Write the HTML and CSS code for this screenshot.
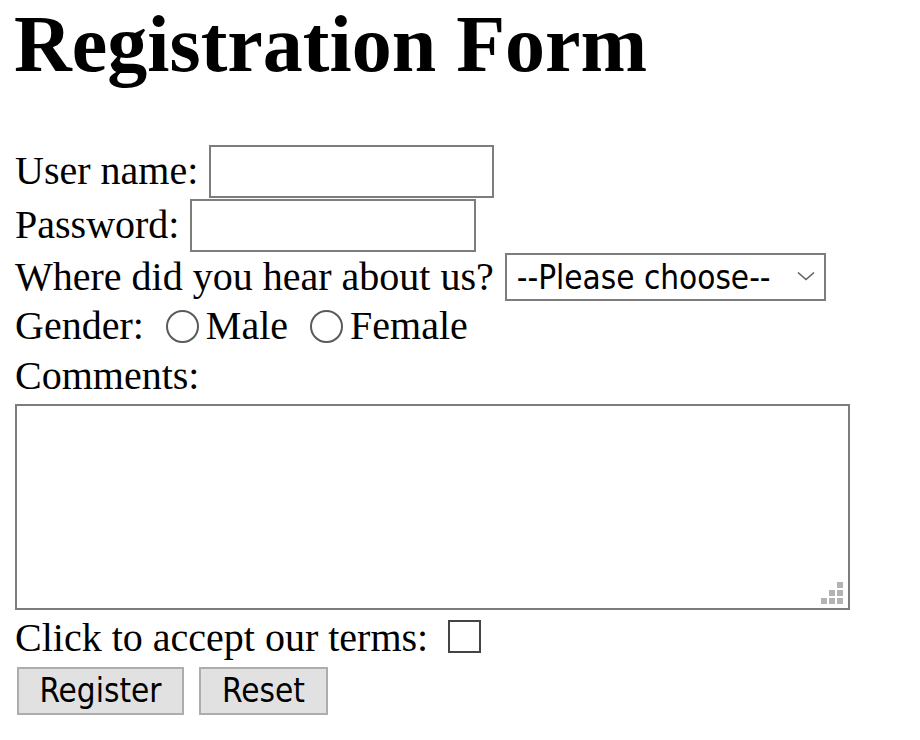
FILE: index.html
```html
<!DOCTYPE html>
<html lang="en">
<head>
<meta charset="utf-8">
<title>Registration Form</title>
<link rel="stylesheet" href="styles.css">
</head>
<body>
<div class="page">
  <h1 class="title">Registration Form</h1>
  <form class="form">
    <div class="row row-user">
      <label class="label" for="user">User name:</label>
      <input class="field field-user" id="user" type="text">
    </div>
    <div class="row row-pass">
      <label class="label" for="pass">Password:</label>
      <input class="field field-pass" id="pass" type="password">
    </div>
    <div class="row row-where">
      <label class="label" for="where">Where did you hear about us?</label>
      <span class="select-wrap">
        <select class="select" id="where">
          <option>--Please choose--</option>
          <option>Friend</option>
          <option>Search engine</option>
          <option>Advertisement</option>
        </select>
        <svg class="chevron" viewBox="0 0 18 10" aria-hidden="true"><path d="M1 1.5 L9 8.5 L17 1.5" fill="none" stroke="#5f5f5f" stroke-width="1.6"/></svg>
      </span>
    </div>
    <div class="row row-gender">
      <span class="label label-gender">Gender:</span>
      <input class="radio" type="radio" name="gender" id="male"><label class="label label-gender" for="male">Male</label>
      <input class="radio" type="radio" name="gender" id="female"><label class="label label-gender" for="female">Female</label>
    </div>
    <div class="row row-comments">
      <label class="label label-comments" for="comments">Comments:</label>
    </div>
    <div class="textarea-wrap">
      <textarea class="comments" id="comments"></textarea>
      <span class="grip" aria-hidden="true">
        <i class="dot d1"></i><i class="dot d2"></i><i class="dot d3"></i>
        <i class="dot d4"></i><i class="dot d5"></i><i class="dot d6"></i>
      </span>
    </div>
    <div class="row row-terms">
      <label class="label label-terms" for="terms">Click to accept our terms:</label>
      <input class="check" type="checkbox" id="terms">
    </div>
    <div class="row row-buttons">
      <button class="btn btn-register" type="submit">Register</button>
      <button class="btn btn-reset" type="reset">Reset</button>
    </div>
  </form>
</div>
</body>
</html>
```

FILE: styles.css
```css
html, body {
  margin: 0;
  padding: 0;
  background: #ffffff;
}

body {
  color: #000000;
  font-family: "Liberation Serif", "Times New Roman", serif;
}

.page {
  padding: 0 0 0 15px;
}

.title {
  font-size: 80px;
  font-weight: bold;
  line-height: 89px;
  margin: 0 0 55px -1px;
}

.form {
  margin: 0;
}

.row {
  display: flex;
  align-items: center;
}

.label {
  font-size: 40px;
  line-height: 46px;
  white-space: pre;
}

.row-user { height: 54px; }
.row-pass { height: 54px; }
.row-where { height: 50px; }

.field {
  box-sizing: border-box;
  height: 53px;
  margin: 0 0 0 11px;
  padding: 0 4px;
  border: 2px solid #7d7d7d;
  background: #ffffff;
  font-size: 33px;
  outline: none;
}

.field-user { width: 285px; }
.field-pass { width: 286px; }

.select-wrap {
  position: relative;
  display: flex;
  margin-left: 11px;
}

.select {
  appearance: none;
  -webkit-appearance: none;
  box-sizing: border-box;
  width: 321px;
  height: 48px;
  margin: 0;
  padding: 0 0 0 10px;
  border: 2px solid #7d7d7d;
  border-radius: 0;
  background: #ffffff;
  color: #000000;
  font-family: "DejaVu Sans Condensed", "Liberation Sans", sans-serif;
  font-size: 33px;
  outline: none;
}

.chevron {
  position: absolute;
  right: 11px;
  top: 18px;
  width: 18px;
  height: 10px;
  pointer-events: none;
}

.row-gender {
  height: 50px;
  align-items: flex-start;
}

.label-gender {
  margin-top: 1px;
}

.radio {
  appearance: none;
  -webkit-appearance: none;
  box-sizing: border-box;
  width: 33px;
  height: 33px;
  margin: 8px 7px 0 22px;
  border: 2px solid #5a5a5a;
  border-radius: 50%;
  background: #ffffff;
}

.row-comments {
  height: 52px;
  align-items: flex-start;
}

.label-comments {
  margin-top: 1px;
}

.textarea-wrap {
  position: relative;
  width: 835px;
  height: 206px;
}

.comments {
  display: block;
  box-sizing: border-box;
  width: 835px;
  height: 206px;
  margin: 0;
  padding: 4px;
  border: 2px solid #7d7d7d;
  background: #ffffff;
  resize: none;
  outline: none;
}

.grip {
  position: absolute;
  right: 7px;
  bottom: 6px;
  width: 22px;
  height: 22px;
}

.dot {
  position: absolute;
  width: 6px;
  height: 6px;
  background: #b3b3b3;
}

.d1 { right: 0; top: 0; }
.d2 { right: 8px; top: 8px; }
.d3 { right: 0; top: 8px; }
.d4 { right: 16px; top: 16px; }
.d5 { right: 8px; top: 16px; }
.d6 { right: 0; top: 16px; }

.row-terms {
  height: 56px;
  align-items: flex-start;
}

.label-terms {
  margin-top: 5px;
}

.check {
  appearance: none;
  -webkit-appearance: none;
  box-sizing: border-box;
  width: 33px;
  height: 33px;
  margin: 10px 0 0 20px;
  border: 2px solid #444444;
  border-radius: 0;
  background: #ffffff;
}

.row-buttons {
  height: 50px;
  align-items: flex-start;
}

.btn {
  box-sizing: border-box;
  height: 48px;
  margin-top: 1px;
  padding: 0;
  border: 2px solid #adadad;
  border-radius: 0;
  background: #e1e1e1;
  color: #000000;
  font-family: "DejaVu Sans Condensed", "Liberation Sans", sans-serif;
  font-size: 33px;
  line-height: 44px;
}

.btn-register {
  width: 167px;
  margin-left: 2px;
}

.btn-reset {
  width: 129px;
  margin-left: 15px;
}
```
